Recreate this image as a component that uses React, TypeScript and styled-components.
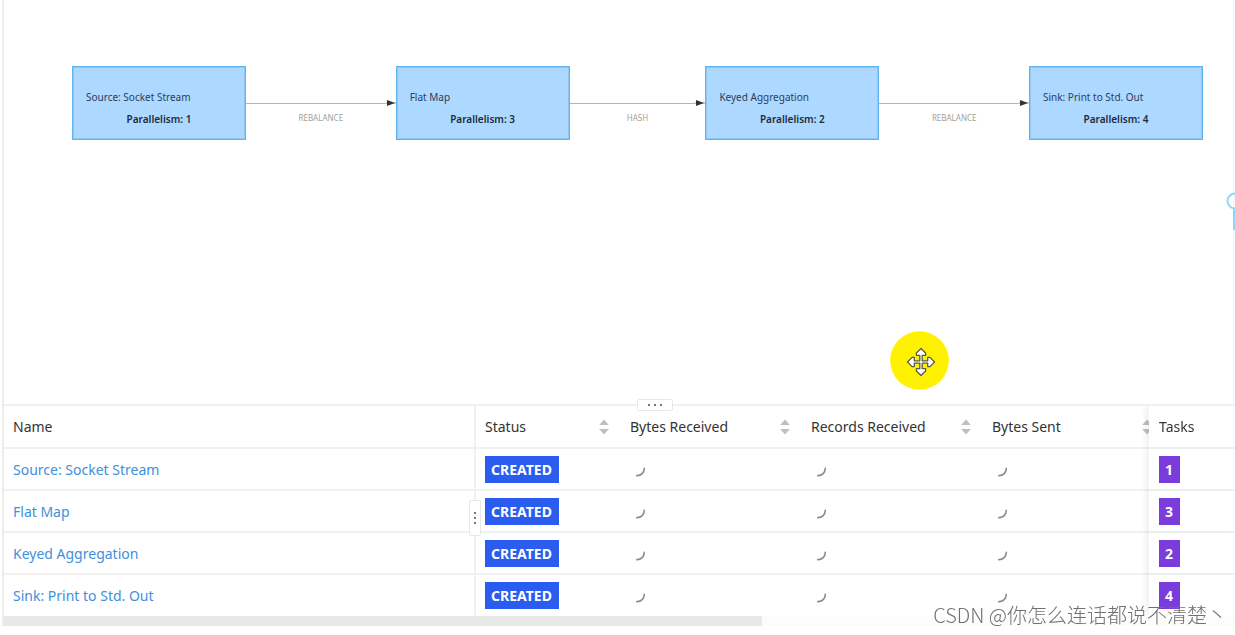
import React from 'react';
import styled, { createGlobalStyle } from 'styled-components';

const GlobalStyle = createGlobalStyle`
  *, *::before, *::after { box-sizing: border-box; }
  body {
    margin: 0;
    background: #fff;
    color: #333;
    font-family: "Noto Sans", "Noto Sans CJK SC", sans-serif;
    font-size: 14px;
    line-height: 20px;
  }
`;

const LINE = '#f1f1f1';

const Page = styled.main`
  position: relative;
  margin-left: 2px;
  padding-bottom: 9px;
  overflow: hidden;
`;

const Frame = styled.div`
  border-left: 2px solid #ededeb;
`;

const Graph = styled.section`
  position: relative;
  height: 404px;
  padding: 66px 30px 0 68px;
  border-right: 2px solid #f7f7f7;
`;

const Flow = styled.div`
  display: flex;
  align-items: flex-start;
`;

const Node = styled.article`
  flex: 0 0 174px;
  height: 74px;
  padding: 20px 13px 0;
  border: 1px solid #5fb3ee;
  background: #add8ff;
  box-shadow: inset 0 0 0 1px #8bc8f6;
`;

const NodeName = styled.h2`
  margin: 0;
  font-size: 10px;
  line-height: 20px;
  font-weight: 400;
  color: #2c3e56;
  white-space: nowrap;
`;

const NodeInfo = styled.p`
  margin: 0;
  font-size: 10px;
  line-height: 24px;
  font-weight: 600;
  color: #1d2b3d;
  text-align: center;
`;

const Edge = styled.div<{ $grow: number }>`
  flex: ${(p) => p.$grow} 1 0;
  padding-top: 32px;
  display: flex;
  flex-direction: column;
  align-items: center;
`;

const Arrow = styled.div`
  display: flex;
  align-items: center;
  align-self: stretch;
  height: 10px;
  &::before {
    content: '';
    flex: 1;
    height: 1px;
    background: #b5b5b5;
  }
`;

const EdgeLabel = styled.span`
  font-size: 8px;
  line-height: 20px;
  color: #a0a0a0;
`;

const ZoomMark = styled.svg`
  position: absolute;
  right: -2px;
  top: 190px;
`;

const Pointer = styled.svg`
  position: absolute;
  left: 72%;
  top: 331px;
`;

const Bottom = styled.section`
  position: relative;
  border-top: 2px solid ${LINE};
`;

const Handle = styled.button<{ $vertical?: boolean }>`
  position: absolute;
  z-index: 3;
  display: flex;
  flex-direction: ${(p) => (p.$vertical ? 'column' : 'row')};
  align-items: center;
  justify-content: center;
  gap: ${(p) => (p.$vertical ? 3 : 4)}px;
  width: ${(p) => (p.$vertical ? 12 : 36)}px;
  height: ${(p) => (p.$vertical ? 36 : 12)}px;
  left: ${(p) => (p.$vertical ? 'calc(100% - 766px)' : 'calc(50% + 17px)')};
  top: ${(p) => (p.$vertical ? 94 : -7)}px;
  padding: 0;
  border: 1px solid #e8e8e6;
  border-radius: 2px;
  background: #fff;
`;

const Dot = styled.i`
  width: 2px;
  height: 2px;
  background: #777;
`;

const Scroller = styled.div`
  overflow: hidden;
`;

const Table = styled.table`
  width: calc(100% + 15px);
  table-layout: fixed;
  border-collapse: separate;
  border-spacing: 0;
`;

const Col = styled.col<{ $width?: number }>`
  ${(p) => (p.$width ? `width: ${p.$width}px;` : '')}
`;

const cell = `
  padding: 0 9px;
  border-bottom: 2px solid ${LINE};
  text-align: left;
  vertical-align: middle;
  white-space: nowrap;
  background: #fff;
  &:first-child { border-right: 2px solid ${LINE}; }
  &:last-child {
    position: sticky;
    right: 0;
    z-index: 2;
    padding-left: 10px;
    box-shadow: -4px 0 4px rgba(0, 0, 0, 0.05);
  }
`;

const Th = styled.th`
  ${cell}
  height: 43px;
  padding-top: 1px;
  font-weight: 400;
`;

const Td = styled.td`
  ${cell}
  height: 42px;
  tr:last-child > & {
    height: 41px;
    border-bottom-width: 1px;
    border-bottom-color: #fff;
  }
`;

const HeadCell = styled.div`
  display: flex;
  align-items: center;
  justify-content: space-between;
`;

const SortButton = styled.button`
  display: flex;
  margin-right: 3px;
  padding: 0;
  border: 0;
  background: none;
`;

const NameLink = styled.a`
  display: inline-block;
  padding-top: 2px;
  color: #3f8fdc;
  text-decoration: none;
`;

const Tag = styled.span<{ $color: string }>`
  display: block;
  width: max-content;
  padding: 0 7px 0 6px;
  line-height: 27px;
  font-weight: 700;
  color: #fff;
  background: ${(p) => p.$color};
`;

const Spinner = styled.svg`
  display: block;
  margin: 5px 0 0 6px;
`;

const ScrollTrack = styled.div`
  height: 10px;
  background: #fcfcfb;
`;

const ScrollThumb = styled.div`
  width: 61.6%;
  height: 100%;
  background: #e8e8e6;
`;

const Watermark = styled.span`
  position: absolute;
  z-index: 4;
  right: 8px;
  bottom: 5px;
  font-family: "Noto Sans CJK SC", sans-serif;
  font-size: 20px;
  line-height: 30px;
  font-weight: 300;
  color: #707070;
  white-space: nowrap;
`;

const SortIcon = () => (
  <svg width="10" height="16" viewBox="0 0 10 16" fill="#bfbfbf">
    <path d="M5 0.5 L9.8 6 H0.2 Z M5 15.5 L9.8 10 H0.2 Z" />
  </svg>
);

const Loading = () => (
  <Spinner width="10" height="10" viewBox="0 0 10 10" role="img" aria-label="loading">
    <path d="M8.2 1.2 A7 7 0 0 1 0.8 8.6" fill="none" stroke="#8c8c8c" strokeWidth="1.6" strokeLinecap="round" />
  </Spinner>
);

const nodes = [
  { name: 'Source: Socket Stream', tasks: 1, ship: 'REBALANCE', grow: 151 },
  { name: 'Flat Map', tasks: 3, ship: 'HASH', grow: 137 },
  { name: 'Keyed Aggregation', tasks: 2, ship: 'REBALANCE', grow: 151 },
  { name: 'Sink: Print to Std. Out', tasks: 4, ship: '', grow: 0 },
];

const metrics = ['Bytes Received', 'Records Received', 'Bytes Sent'];

export default function App() {
  return (
    <Page>
      <GlobalStyle />
      <Frame>
        <Graph>
          <Flow>
            {nodes.map((n) => (
              <React.Fragment key={n.name}>
                <Node>
                  <NodeName>{n.name}</NodeName>
                  <NodeInfo>Parallelism: {n.tasks}</NodeInfo>
                </Node>
                {n.ship && (
                  <Edge $grow={n.grow}>
                    <Arrow>
                      <svg width="10" height="6" viewBox="0 0 10 6">
                        <path d="M0 3 H10" stroke="#999" />
                        <path d="M1 0 L9 3 L1 6 Z" fill="#333" />
                      </svg>
                    </Arrow>
                    <EdgeLabel>{n.ship}</EdgeLabel>
                  </Edge>
                )}
              </React.Fragment>
            ))}
          </Flow>
          <ZoomMark width="10" height="42" viewBox="0 0 10 42" fill="none" stroke="#91d5ff" strokeWidth="2">
            <circle cx="10" cy="11" r="7.5" />
            <path d="M9 18 V40" />
          </ZoomMark>
          <Pointer width="62" height="60" viewBox="0 0 62 60">
            <circle cx="30.5" cy="29.5" r="29.3" fill="#fff200" />
            <path
              d="M32 17.5 L36.6 22 V24.3 H33.2 V29.8 H38.7 V26.4 H41 L45.5 31 L41 35.6 H38.7 V32.2 H33.2 V37.7 H36.6 V40 L32 44.5 L27.4 40 V37.7 H30.8 V32.2 H25.3 V35.6 H23 L18.5 31 L23 26.4 H25.3 V29.8 H30.8 V24.3 H27.4 V22 Z"
              fill="#fff"
              stroke="#5a5a4a"
              strokeWidth="1.3"
              strokeLinejoin="round"
            />
          </Pointer>
        </Graph>
        <Bottom>
          <Handle aria-label="Resize panel"><Dot /><Dot /><Dot /></Handle>
          <Handle $vertical aria-label="Resize column"><Dot /><Dot /><Dot /></Handle>
          <Scroller>
            <Table>
              <colgroup>
                <Col />
                <Col $width={145} />
                {metrics.map((m) => <Col key={m} $width={181} />)}
                <Col $width={86} />
              </colgroup>
              <thead>
                <tr>
                  <Th>Name</Th>
                  {['Status', ...metrics].map((h) => (
                    <Th key={h}>
                      <HeadCell>
                        {h}
                        <SortButton aria-label={`Sort by ${h}`}><SortIcon /></SortButton>
                      </HeadCell>
                    </Th>
                  ))}
                  <Th>Tasks</Th>
                </tr>
              </thead>
              <tbody>
                {nodes.map((n) => (
                  <tr key={n.name}>
                    <Td><NameLink href="#">{n.name}</NameLink></Td>
                    <Td><Tag $color="#2b5cf0">CREATED</Tag></Td>
                    {metrics.map((m) => <Td key={m}><Loading /></Td>)}
                    <Td><Tag $color="#7a3ddb">{n.tasks}</Tag></Td>
                  </tr>
                ))}
              </tbody>
            </Table>
          </Scroller>
          <ScrollTrack><ScrollThumb /></ScrollTrack>
        </Bottom>
      </Frame>
      <Watermark>CSDN @你怎么连话都说不清楚丶</Watermark>
    </Page>
  );
}
